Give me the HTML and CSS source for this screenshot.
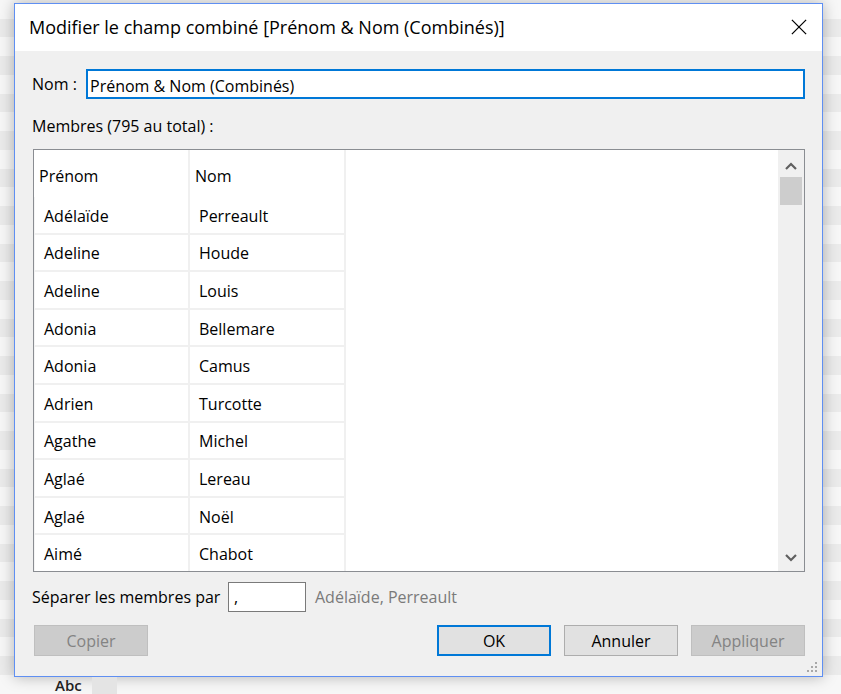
FILE: index.html
```html
<!DOCTYPE html>
<html lang="fr">
<head>
<meta charset="utf-8">
<title>Modifier le champ combiné</title>
<link rel="stylesheet" href="styles.css">
</head>
<body>
<div class="desk">
  <div class="dialog">
    <div class="titlebar">
      <span class="title">Modifier le champ combiné [Prénom &amp; Nom (Combinés)]</span>
      <svg class="close" width="18" height="18" viewBox="0 0 18 18"><path d="M1 1 L17 17 M17 1 L1 17" stroke="#000" stroke-width="1.4" fill="none"/></svg>
    </div>
    <div class="body">
      <div class="name-row">
        <span class="lbl">Nom :</span>
        <div class="name-input">Prénom &amp; Nom (Combinés)</div>
      </div>
      <div class="members-label">Membres (795 au total) :</div>
      <div class="listbox">
        <div class="grid">
          <div class="th">Prénom</div><div class="th">Nom</div>
          <div class="td">Adélaïde</div><div class="td">Perreault</div>
          <div class="td">Adeline</div><div class="td">Houde</div>
          <div class="td">Adeline</div><div class="td">Louis</div>
          <div class="td">Adonia</div><div class="td">Bellemare</div>
          <div class="td">Adonia</div><div class="td">Camus</div>
          <div class="td">Adrien</div><div class="td">Turcotte</div>
          <div class="td">Agathe</div><div class="td">Michel</div>
          <div class="td">Aglaé</div><div class="td">Lereau</div>
          <div class="td">Aglaé</div><div class="td">Noël</div>
          <div class="td">Aimé</div><div class="td">Chabot</div>
        </div>
        <div class="scrollbar">
          <svg class="arrow" width="12" height="8" viewBox="0 0 12 8"><path d="M1 7 L6 2 L11 7" stroke="#606060" stroke-width="2.2" fill="none"/></svg>
          <div class="thumb"></div>
          <div class="track"></div>
          <svg class="arrow" width="12" height="8" viewBox="0 0 12 8"><path d="M1 1 L6 6 L11 1" stroke="#606060" stroke-width="2.2" fill="none"/></svg>
        </div>
      </div>
      <div class="sep-row">
        <span class="lbl">Séparer les membres par</span>
        <div class="sep-input">,</div>
        <span class="preview">Adélaïde, Perreault</span>
      </div>
      <div class="buttons">
        <button class="btn disabled">Copier</button>
        <span class="spacer"></span>
        <button class="btn default">OK</button>
        <button class="btn">Annuler</button>
        <button class="btn disabled">Appliquer</button>
      </div>
      <svg class="grip" width="12" height="12" viewBox="0 0 12 12" fill="#a8a8a8">
        <rect x="9" y="1" width="2" height="2"/>
        <rect x="5" y="5" width="2" height="2"/><rect x="9" y="5" width="2" height="2"/>
        <rect x="1" y="9" width="2" height="2"/><rect x="5" y="9" width="2" height="2"/><rect x="9" y="9" width="2" height="2"/>
      </svg>
    </div>
  </div>
  <div class="under">
    <span class="abc">Abc</span>
    <span class="block"></span>
  </div>
</div>
</body>
</html>
```

FILE: styles.css
```css
* { box-sizing: border-box; }
html, body { margin: 0; padding: 0; }
body {
  width: 841px;
  height: 694px;
  overflow: hidden;
  font-family: "Open Sans", "Noto Sans", "Liberation Sans", sans-serif;
  font-size: 16px;
  color: #000;
  background: repeating-linear-gradient(to bottom, #f7f7f7 0px, #f7f7f7 19px, #ebebeb 19px, #ebebeb 37.5px);
}
.desk {
  padding: 3px 0 0 14px;
}
.dialog {
  width: 809px;
  height: 674px;
  border: 1px solid #5f8ff2;
  background: #f0f0f0;
  box-shadow: 0 0 14px rgba(0,0,0,0.28);
  display: flex;
  flex-direction: column;
}
.titlebar {
  height: 47px;
  background: #fff;
  display: flex;
  align-items: center;
  padding: 0 15px 0 14px;
}
.title {
  flex: 1;
  font-size: 18px;
  padding-bottom: 2px;
}
.close { display: block; margin-top: -2px; width: 16px; height: 16px; }
.body {
  flex: 1;
  position: relative;
  padding: 18px 17px 0 17px;
  display: flex;
  flex-direction: column;
}
.name-row {
  display: flex;
  align-items: center;
  height: 30px;
}
.lbl { white-space: nowrap; }
.name-row .lbl { width: 54px; margin-top: 0; }
.name-input {
  flex: 1;
  height: 30px;
  border: 2px solid #0078d7;
  background: #fff;
  padding: 2px 0 0 2px;
  line-height: 26px;
}
.members-label {
  margin-top: 17px;
  height: 20px;
  line-height: 20px;
}
.listbox {
  margin-top: 13px;
  margin-left: 1px;
  height: 423px;
  border: 1px solid #8a8d92;
  background: #fff;
  display: flex;
}
.grid {
  flex: 1;
  display: grid;
  grid-template-columns: 156px 156px;
  grid-template-rows: 47px;
  grid-auto-rows: 37.6px;
  overflow: hidden;
  align-content: start;
}
.th {
  padding: 15px 0 0 5px;
  border-right: 2px solid #f0f0f0;
}
.td {
  display: flex;
  align-items: center;
  padding-left: 9px;
  padding-top: 2px;
  border-right: 2px solid #f0f0f0;
  border-bottom: 2px solid #f0f0f0;
  border-left: 1px solid #f4f4f4;
}
.td:nth-child(even) { border-left: none; padding-left: 9px; }
.scrollbar {
  width: 26px;
  background: #f0f0f0;
  display: flex;
  flex-direction: column;
  align-items: center;
  padding: 12px 0 9px;
}
.thumb {
  width: 22px;
  height: 28px;
  background: #cdcdcd;
  margin-top: 7px;
  margin-left: -1px;
}
.track { flex: 1; }
.sep-row {
  display: flex;
  align-items: center;
  height: 30px;
  margin-top: 10px;
}
.sep-row .lbl { width: 196px; }
.sep-input {
  width: 78px;
  height: 30px;
  border: 1px solid #7a7a7a;
  background: #fff;
  padding-left: 5px;
  line-height: 28px;
}
.preview { margin-left: 9px; color: #7a7a7a; }
.buttons {
  display: flex;
  margin-top: 13px;
  padding-left: 2px;
  gap: 13px;
  height: 31px;
}
.spacer { flex: 1; }
.btn {
  width: 114px;
  height: 31px;
  font-family: inherit;
  font-size: 16px;
  background: #e1e1e1;
  border: 1px solid #adadad;
  color: #000;
  padding: 0;
}
.btn.default { border: 2px solid #0078d7; }
.btn.disabled { background: #cccccc; border-color: #bfbfbf; color: #838383; }
.grip {
  position: absolute;
  right: 4px;
  bottom: 3px;
}
.under {
  display: flex;
  align-items: flex-start;
  padding-left: 41px;
  height: 17px;
}
.abc {
  font-size: 15px;
  font-weight: 600;
  color: #222;
  line-height: 16px;
}
.block {
  width: 25px;
  height: 17px;
  background: #e4e4e4;
  margin-left: 10px;
}
```
